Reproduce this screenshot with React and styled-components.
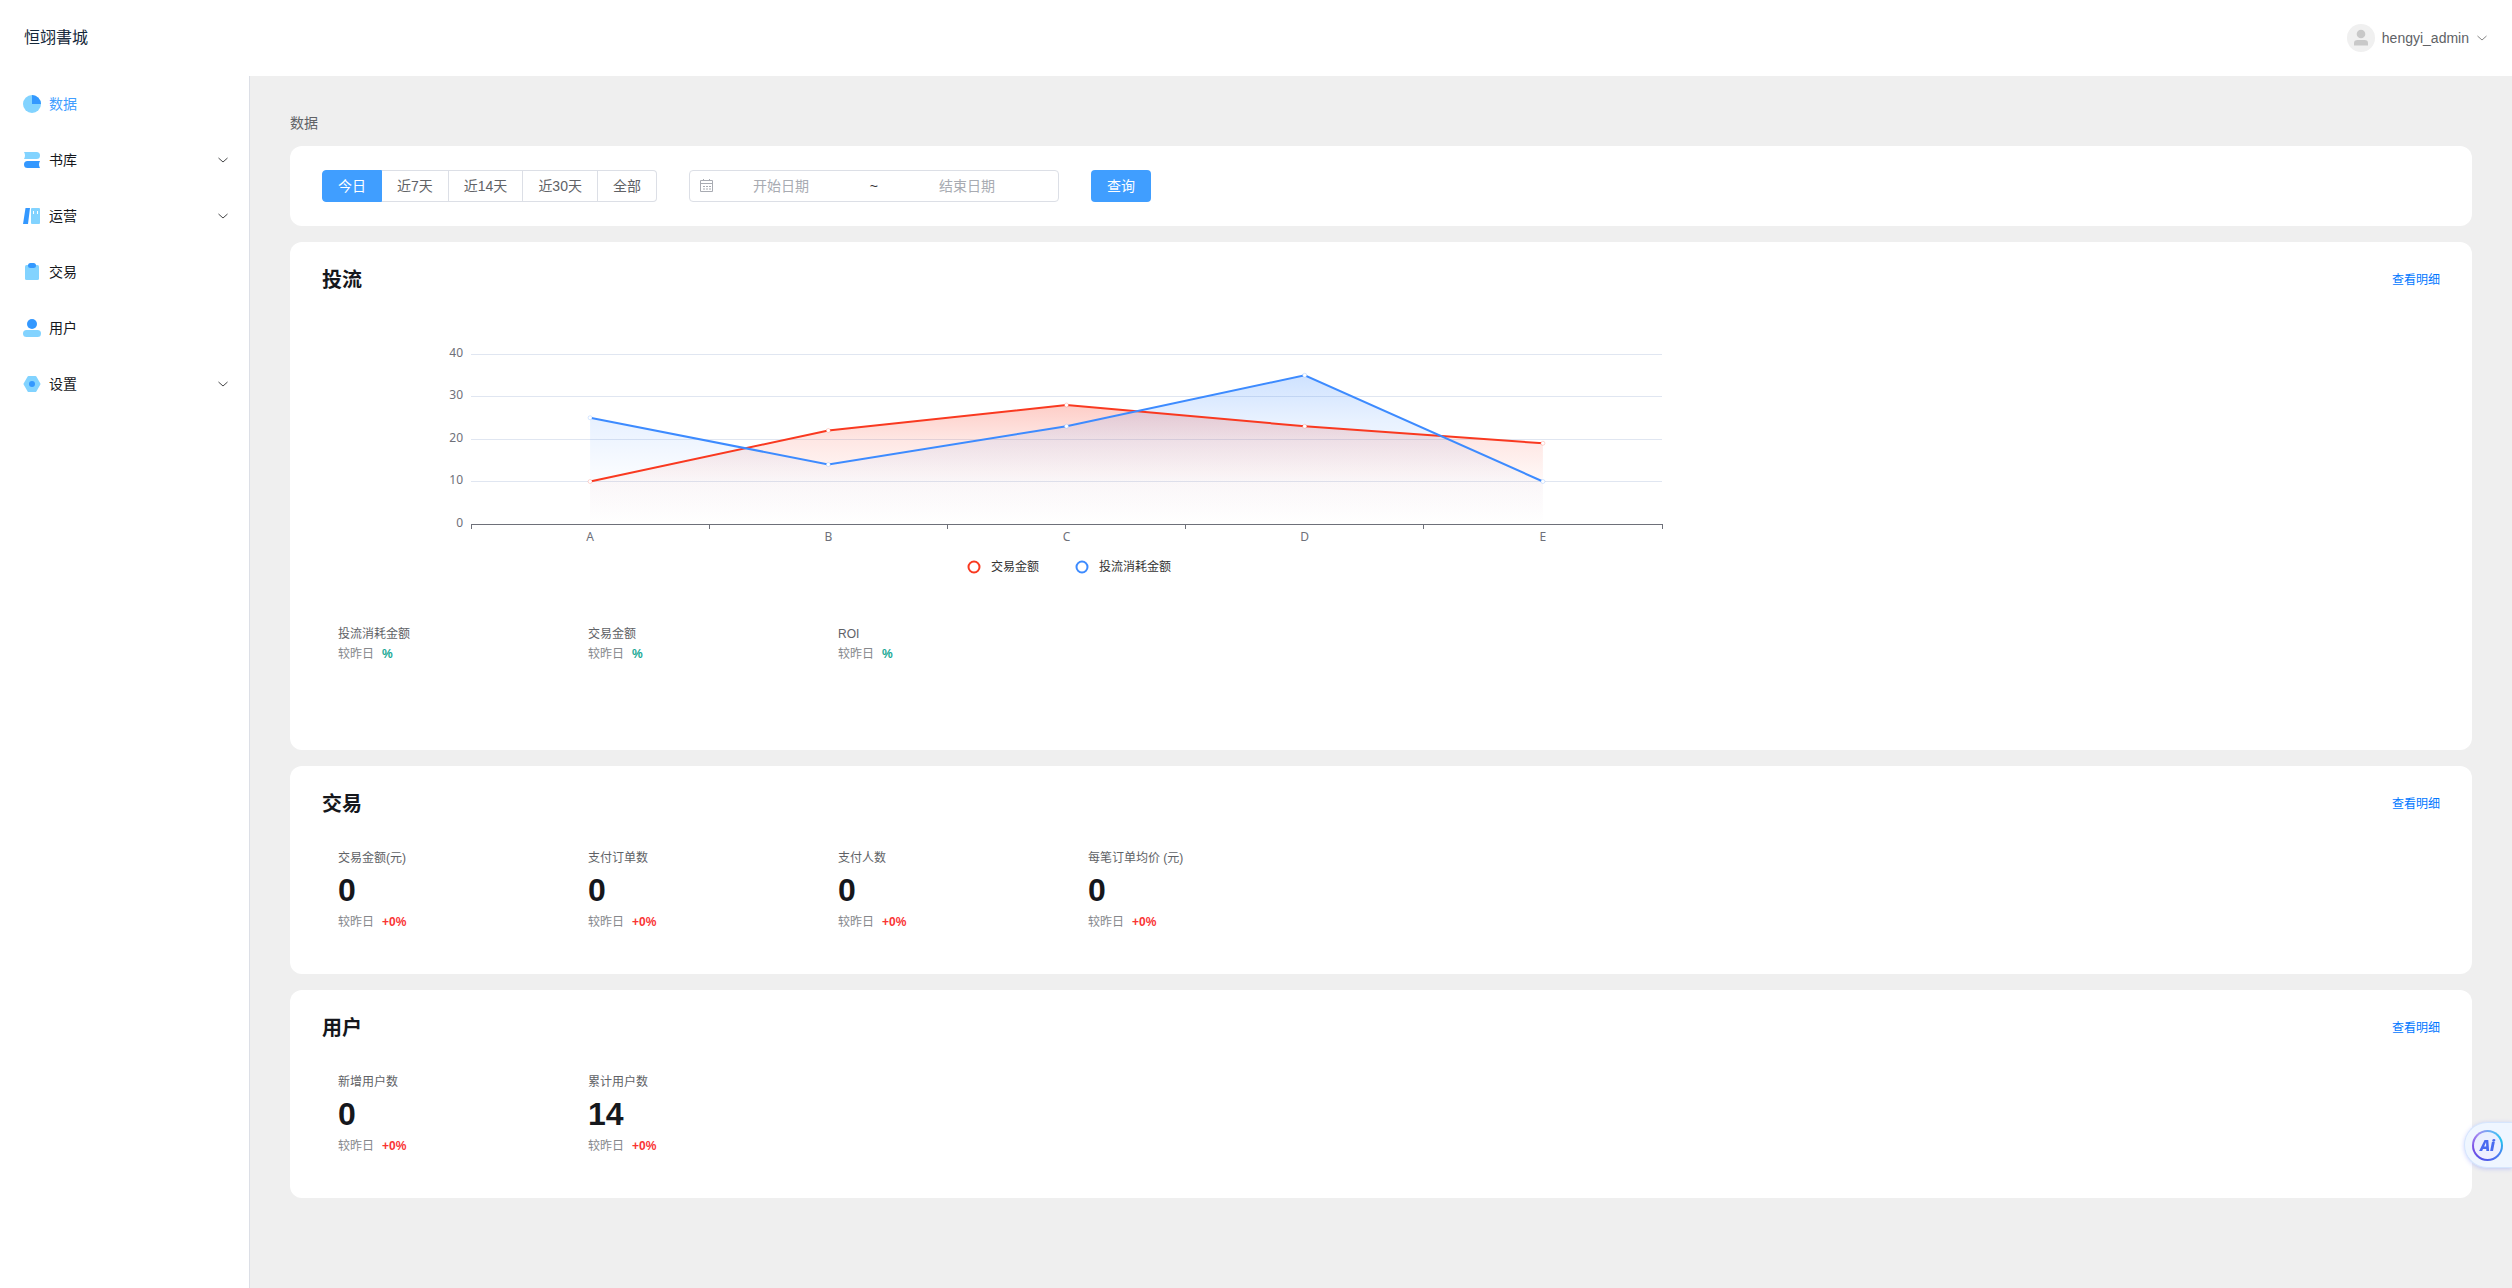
import React, { useState } from 'react'
import styled, { createGlobalStyle, css } from 'styled-components'

// data
const menu = [
  { name: '数据', icon: 'data', active: true },
  { name: '书库', icon: 'books', children: true },
  { name: '运营', icon: 'operate', children: true },
  { name: '交易', icon: 'trade' },
  { name: '用户', icon: 'user' },
  { name: '设置', icon: 'setting', children: true },
]

const ranges = ['今日', '近7天', '近14天', '近30天', '全部']

const flowStats = [
  { label: '投流消耗金额', rate: '%' },
  { label: '交易金额', rate: '%' },
  { label: 'ROI', rate: '%' },
]

const tradeStats = [
  { label: '交易金额(元)', value: '0', rate: '+0%' },
  { label: '支付订单数', value: '0', rate: '+0%' },
  { label: '支付人数', value: '0', rate: '+0%' },
  { label: '每笔订单均价 (元)', value: '0', rate: '+0%' },
]

const userStats = [
  { label: '新增用户数', value: '0', rate: '+0%' },
  { label: '累计用户数', value: '14', rate: '+0%' },
]

const chart = {
  categories: ['A', 'B', 'C', 'D', 'E'],
  series: [
    { id: 'trade', name: '交易金额', color: '#f93920', values: [10, 22, 28, 23, 19] },
    { id: 'flow', name: '投流消耗金额', color: '#3d8bff', values: [25, 14, 23, 35, 10] },
  ],
}

// styling
const GlobalStyle = createGlobalStyle`
  * {
    box-sizing: border-box;
  }

  body {
    margin: 0;
    background: #fff;
    color: #15171c;
    font-family: 'Liberation Sans', 'Noto Sans CJK SC', sans-serif;
    font-size: 14px;
    line-height: 20px;
  }

  button, input {
    font: inherit;
  }
`

const Page = styled.div`
  display: flex;
  flex-direction: column;
  min-height: 100vh;
`

const Header = styled.header`
  display: flex;
  align-items: center;
  justify-content: space-between;
  height: 76px;
  padding: 0 24px;
`

const Brand = styled.div`
  color: #14283a;
  font-size: 16px;
`

const Account = styled.button`
  display: flex;
  align-items: center;
  gap: 7px;
  padding: 0;
  border: 0;
  background: none;
  color: #606266;
  cursor: pointer;
`

const Body = styled.div`
  display: flex;
  flex: 1;
`

const Sidebar = styled.nav`
  flex: 0 0 250px;
  border-right: 1px solid #dcdfe6;
`

const menuItem = css`
  display: flex;
  align-items: center;
  gap: 8px;
  width: 100%;
  height: 56px;
  padding: 0 20px 0 23px;
  border: 0;
  background: none;
  color: ${({ $active }) => ($active ? '#409eff' : '#15171c')};
  text-align: left;
  text-decoration: none;
  cursor: pointer;
`

const MenuLink = styled.a`
  ${menuItem}
`

const MenuButton = styled.button`
  ${menuItem}
`

const MenuName = styled.span`
  flex: 1;
`

const Main = styled.main`
  display: flex;
  flex: 1;
  flex-direction: column;
  gap: 16px;
  min-width: 0;
  padding: 37px 40px 40px;
  background: #efefef;
`

const Crumb = styled.div`
  margin-bottom: -3px;
  color: #606266;
`

const Card = styled.section`
  padding: 24px 32px 0;
  border-radius: 12px;
  background: #fff;
`

const FilterCard = styled.form`
  display: flex;
  flex-wrap: wrap;
  gap: 32px;
  padding: 24px 32px;
  border-radius: 12px;
  background: #fff;
`

const RangeGroup = styled.div`
  display: flex;
`

const RangeButton = styled.button`
  height: 32px;
  padding: 0 15px;
  border: 1px solid #dcdfe6;
  border-left-width: 0;
  background: #fff;
  color: #606266;
  line-height: 20px;
  cursor: pointer;

  &:first-child {
    border-left-width: 1px;
    border-radius: 4px 0 0 4px;
  }

  &:last-child {
    border-radius: 0 4px 4px 0;
  }

  ${({ $active }) =>
    $active &&
    css`
      border-color: #409eff;
      background: #409eff;
      color: #fff;
    `}
`

const DateRange = styled.div`
  display: flex;
  align-items: center;
  width: 370px;
  height: 32px;
  padding: 0 24px 0 10px;
  border: 1px solid #dcdfe6;
  border-radius: 4px;
  color: #303133;
`

const DateInput = styled.input`
  flex: 1;
  min-width: 0;
  padding: 0;
  border: 0;
  outline: 0;
  background: none;
  text-align: center;

  &::placeholder {
    color: #a8abb2;
  }
`

const DateSeparator = styled.span`
  width: 52px;
  text-align: center;
`

const SearchButton = styled.button`
  height: 32px;
  padding: 0 16px;
  border: 0;
  border-radius: 4px;
  background: #409eff;
  color: #fff;
  cursor: pointer;
`

const CardHead = styled.div`
  display: flex;
  align-items: center;
  justify-content: space-between;
`

const CardTitle = styled.h2`
  margin: 0;
  font-size: 20px;
  font-weight: 700;
  line-height: 28px;
`

const DetailLink = styled.a`
  color: #0077ff;
  font-size: 12px;
  text-decoration: none;
`

const ChartBox = styled.svg`
  display: block;
  width: 100%;
  max-width: 1489px;
  font-family: 'Noto Sans', 'Noto Sans CJK SC', sans-serif;
  font-size: 12px;
`

const StatList = styled.div`
  display: flex;
  min-height: 156px;
  padding: 30px 16px;
`

const StatItem = styled.div`
  width: 250px;
  font-size: 12px;
`

const StatLabel = styled.div`
  color: #606266;
`

const StatValue = styled.div`
  font-size: 32px;
  font-weight: 700;
  line-height: 44px;
`

const StatCompare = styled.div`
  display: flex;
  gap: 8px;
  color: #86888c;
`

const Rate = styled.span`
  color: ${({ $up }) => ($up ? '#f93434' : '#16a894')};
  font-weight: 700;
`

const Assistant = styled.button`
  position: fixed;
  right: 0;
  bottom: 120px;
  display: flex;
  align-items: center;
  height: 46px;
  padding: 0 9px 0 7px;
  border: 1px solid #d6e6fd;
  border-right: 0;
  border-radius: 23px 0 0 23px;
  background: #eff6ff;
  box-shadow: 0 1px 4px rgba(90, 110, 255, 0.3);
  cursor: pointer;
`

const AssistantRing = styled.span`
  display: flex;
  align-items: center;
  justify-content: center;
  width: 31px;
  height: 31px;
  border: 2px solid transparent;
  border-radius: 50%;
  background:
    linear-gradient(#e8efff, #f1efff) padding-box,
    conic-gradient(from 20deg, #5fb4f5, #22c3ee 50deg, #4a7bf0 110deg, #5254e8 180deg, #7a4fe6 240deg, #a48af0 300deg, #5fb4f5) border-box;
  color: #4a6af0;
  font-family: 'Open Sans', sans-serif;
  font-size: 15px;
  font-style: italic;
  font-weight: 800;
`
//endstyling

const icons = {
  data: (
    <>
      <circle cx='9' cy='9' r='9' fill='#82d3ff' />
      <path d='M9 0a9 9 0 0 1 9 9H9z' fill='#3398ff' />
    </>
  ),
  books: (
    <>
      <path d='M1 1h12.500a3.500 3.500 0 0 1 0 7H1q2-3.500 0-7z' fill='#82d3ff' />
      <path d='M17 10H4.500a3.500 3.500 0 0 0 0 7H17q-2-3.500 0-7z' fill='#3398ff' />
    </>
  ),
  operate: (
    <>
      <path d='M2.500 1H7L5 17H0z' fill='#3398ff' />
      <rect x='8' y='1' width='9' height='16' rx='1' fill='#82d3ff' />
      <path d='M10.500 4v3M14.500 4v3' stroke='#fff' />
    </>
  ),
  trade: (
    <>
      <rect x='2' y='2' width='14' height='15' rx='1.500' fill='#82d3ff' />
      <rect x='5' y='0' width='8' height='5' rx='2.500' fill='#3398ff' />
    </>
  ),
  user: (
    <>
      <circle cx='9' cy='5' r='5' fill='#3398ff' />
      <rect x='0' y='11' width='18' height='7' rx='3.500' fill='#82d3ff' />
    </>
  ),
  setting: (
    <>
      <path
        d='M5.500 2h7L16.500 9l-4 7h-7l-4-7z'
        fill='#82d3ff'
        stroke='#82d3ff'
        strokeWidth='2'
        strokeLinejoin='round'
      />
      <circle cx='9' cy='9' r='3' fill='#3398ff' />
    </>
  ),
}

const MenuIcon = ({ name }) => (
  <svg width='18' height='18' viewBox='0 0 18 18' aria-hidden='true'>
    {icons[name]}
  </svg>
)

const Chevron = ({ size, color }) => (
  <svg width={size} height={size} viewBox='0 0 12 12' fill='none' aria-hidden='true'>
    <path d='M1.500 4 6 8 10.500 4' stroke={color} strokeWidth='0.900' />
  </svg>
)

const Avatar = () => (
  <svg width='28' height='28' viewBox='0 0 28 28' aria-hidden='true'>
    <circle cx='14' cy='14' r='14' fill='#f0f0f0' />
    <circle cx='14' cy='10' r='4.300' fill='#c8c8c8' />
    <path d='M7 21.500V19q0-3 3.500-3h7q3.500 0 3.500 3v2.500z' fill='#c8c8c8' />
  </svg>
)

const Calendar = () => (
  <svg width='14' height='14' viewBox='0 0 14 14' fill='none' stroke='#a8abb2' aria-hidden='true'>
    <path d='M.5 1.500h12v11H.5zM.5 4.500h12M3.500 0v2M9.500 0v2' />
    <path d='M3 7.500h8M3 10h8' strokeDasharray='2 1' />
  </svg>
)

const LineChart = () => {
  const left = 149
  const right = 1340
  const bottom = 230
  const step = (right - left) / chart.categories.length
  const x = i => left + step * (i + 0.5)
  const y = v => bottom - v * 4.25

  return (
    <ChartBox viewBox='0 0 1489 300' role='img' aria-label='投流'>
      <defs>
        {chart.series.map(({ id, color }) => (
          // both areas fade over the same height as the highest point
          <linearGradient
            key={id}
            id={id}
            gradientUnits='userSpaceOnUse'
            x1='0'
            y1={id === 'flow' ? y(35) : y(28)}
            x2='0'
            y2={bottom}
          >
            <stop offset='0' stopColor={color} stopOpacity='0.25' />
            <stop offset='0.3' stopColor={color} stopOpacity='0.12' />
            <stop offset='0.65' stopColor={color} stopOpacity='0.03' />
            <stop offset='1' stopColor={color} stopOpacity='0' />
          </linearGradient>
        ))}
      </defs>

      {[40, 30, 20, 10, 0].map(v => {
        const line = Math.floor(y(v)) + 0.5
        return (
          <g key={v}>
            <path d={`M${left} ${line}H${right}`} stroke={v ? '#e0e6f1' : '#6e7079'} />
            <text x='141' y={line + 2} textAnchor='end' fill='#6e7079'>
              {v}
            </text>
          </g>
        )
      })}

      {[0, 1, 2, 3, 4, 5].map(i => (
        <path key={i} d={`M${Math.floor(left + step * i) + 0.5} 230v5`} stroke='#6e7079' />
      ))}
      {chart.categories.map((name, i) => (
        <text key={name} x={x(i)} y='247' textAnchor='middle' fill='#6e7079'>
          {name}
        </text>
      ))}

      {chart.series.map(({ id, values }) => (
        <path
          key={id}
          d={`M${x(0)} ${bottom}${values.map((v, i) => `L${x(i)} ${y(v)}`).join('')}V${bottom}z`}
          fill={`url(#${id})`}
        />
      ))}
      {chart.series.map(({ id, color, values }) => (
        <g key={id}>
          <polyline
            points={values.map((v, i) => `${x(i)},${y(v)}`).join(' ')}
            fill='none'
            stroke={color}
            strokeWidth='2'
          />
          {values.map((v, i) => (
            <circle
              key={i}
              cx={x(i)}
              cy={y(v)}
              r='2'
              fill='#fff'
              stroke={color}
              strokeOpacity='0.2'
            />
          ))}
        </g>
      ))}

      {chart.series.map(({ id, name, color }, i) => (
        <g key={id}>
          <circle cx={652 + i * 108} cy='273' r='5.500' fill='#fff' stroke={color} strokeWidth='2' />
          <text x={669 + i * 108} y='277' fill='#333'>
            {name}
          </text>
        </g>
      ))}
    </ChartBox>
  )
}

const Stats = ({ items }) => (
  <StatList>
    {items.map(({ label, value, rate }) => (
      <StatItem key={label}>
        <StatLabel>{label}</StatLabel>
        {value && <StatValue>{value}</StatValue>}
        <StatCompare>
          较昨日
          <Rate $up={rate.startsWith('+')}>{rate}</Rate>
        </StatCompare>
      </StatItem>
    ))}
  </StatList>
)

const Panel = ({ title, items, children }) => (
  <Card>
    <CardHead>
      <CardTitle>{title}</CardTitle>
      <DetailLink href='#'>查看明细</DetailLink>
    </CardHead>
    {children}
    <Stats items={items} />
  </Card>
)

const App = () => {
  const [range, setRange] = useState('今日')

  return (
    <Page>
      <GlobalStyle />
      <Header>
        <Brand>恒翊書城</Brand>
        <Account type='button'>
          <Avatar />
          hengyi_admin
          <Chevron size={12} color='#777' />
        </Account>
      </Header>
      <Body>
        <Sidebar>
          {menu.map(({ name, icon, active, children }) =>
            children ? (
              <MenuButton key={name} type='button' aria-expanded='false'>
                <MenuIcon name={icon} />
                <MenuName>{name}</MenuName>
                <Chevron size={12} color='#303133' />
              </MenuButton>
            ) : (
              <MenuLink key={name} href='#' $active={active}>
                <MenuIcon name={icon} />
                <MenuName>{name}</MenuName>
              </MenuLink>
            )
          )}
        </Sidebar>
        <Main>
          <Crumb>数据</Crumb>
          <FilterCard onSubmit={e => e.preventDefault()}>
            <RangeGroup>
              {ranges.map(name => (
                <RangeButton
                  key={name}
                  type='button'
                  $active={name === range}
                  onClick={() => setRange(name)}
                >
                  {name}
                </RangeButton>
              ))}
            </RangeGroup>
            <DateRange>
              <Calendar />
              <DateInput placeholder='开始日期' aria-label='开始日期' />
              <DateSeparator>~</DateSeparator>
              <DateInput placeholder='结束日期' aria-label='结束日期' />
            </DateRange>
            <SearchButton type='submit'>查询</SearchButton>
          </FilterCard>
          <Panel title='投流' items={flowStats}>
            <LineChart />
          </Panel>
          <Panel title='交易' items={tradeStats} />
          <Panel title='用户' items={userStats} />
        </Main>
      </Body>
      <Assistant type='button'>
        <AssistantRing>Ai</AssistantRing>
      </Assistant>
    </Page>
  )
}

export default App
